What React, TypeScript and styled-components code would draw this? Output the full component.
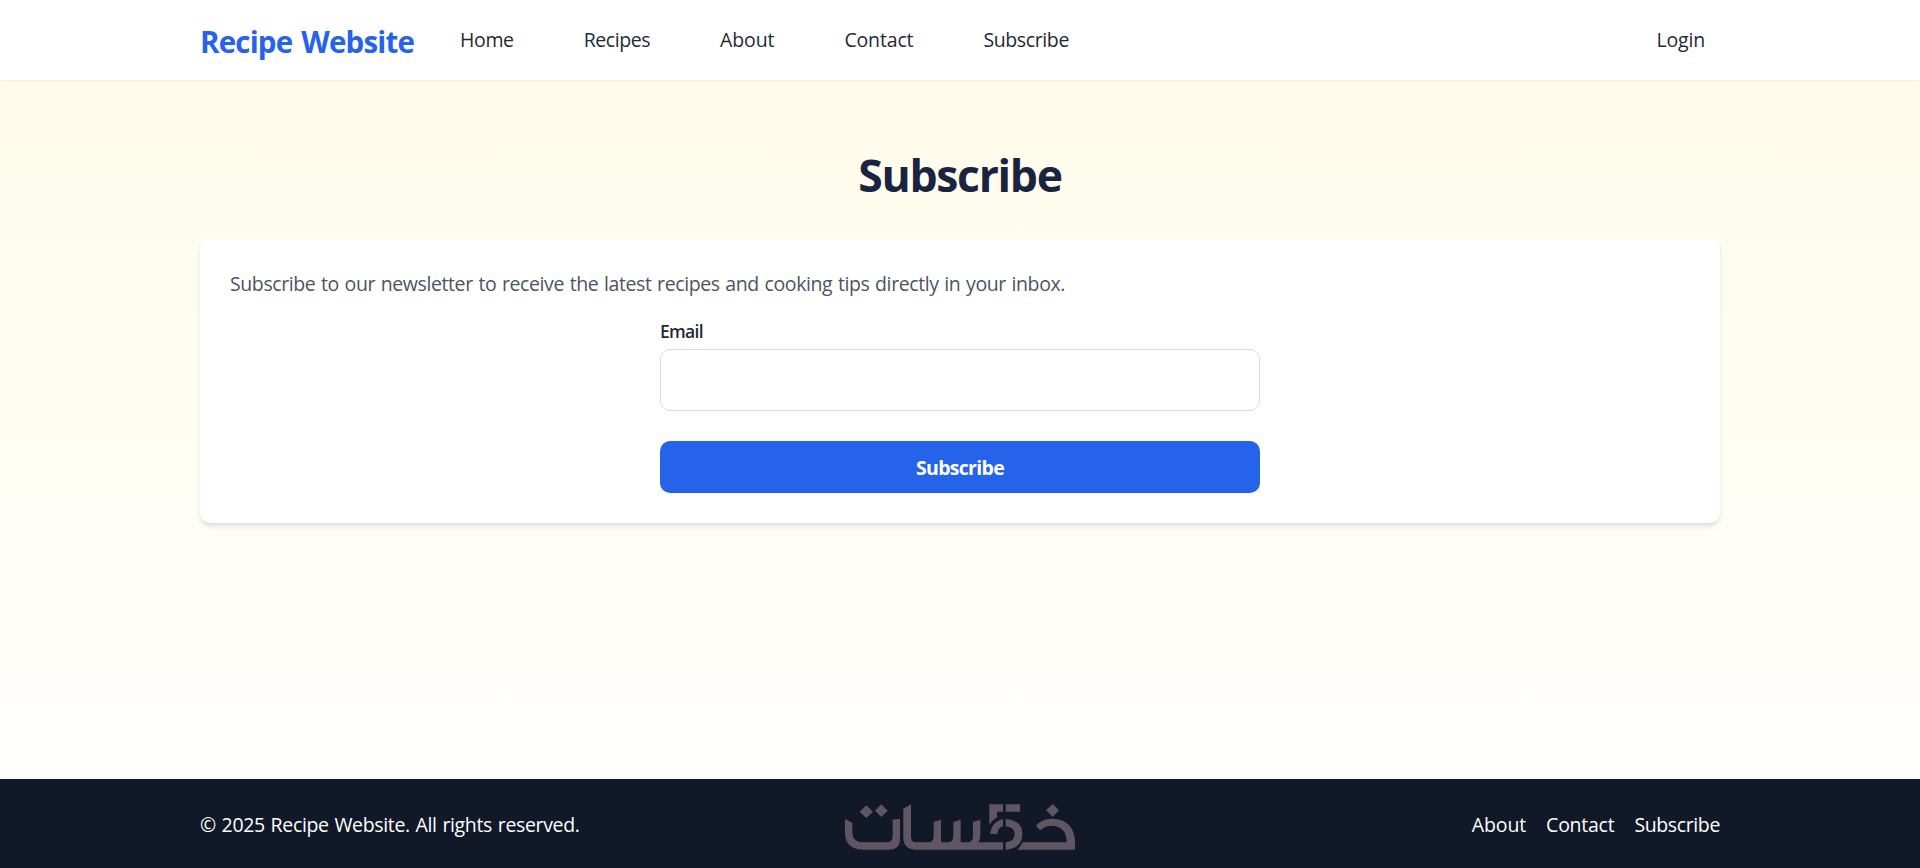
import React, { ReactElement } from 'react'
import styled, { createGlobalStyle } from 'styled-components'

interface NavItem {
    label: string
    spacing: number
}

const navItems: NavItem[] = [
    { label: 'Home', spacing: -0.35 },
    { label: 'Recipes', spacing: -0.45 },
    { label: 'About', spacing: -0.1 },
    { label: 'Contact', spacing: -0.15 },
    { label: 'Subscribe', spacing: -0.38 },
]

const footerItems: NavItem[] = [
    { label: 'About', spacing: -0.1 },
    { label: 'Contact', spacing: -0.25 },
    { label: 'Subscribe', spacing: -0.38 },
]

function NavBar(): ReactElement {
    return (
        <Header>
            <Container>
                <Brand href="#">Recipe Website</Brand>
                <NavList>
                    {navItems.map(item => (
                        <li key={item.label}>
                            <NavLink href="#" $spacing={item.spacing}>{item.label}</NavLink>
                        </li>
                    ))}
                </NavList>
                <LoginLink href="#" $spacing={-0.2}>Login</LoginLink>
            </Container>
        </Header>
    )
}

function SubscribeForm(): ReactElement {
    return (
        <Card>
            <Intro>
                Subscribe to our newsletter to receive the latest recipes and cooking tips directly in your inbox.
            </Intro>
            <Form onSubmit={e => e.preventDefault()}>
                <Label htmlFor="email">Email</Label>
                <Input id="email" type="email" />
                <SubmitButton type="submit">Subscribe</SubmitButton>
            </Form>
        </Card>
    )
}

function Khamsat(): ReactElement {
    return (
        <Watermark viewBox="45 103 690 138" aria-hidden="true">
            <path d="M109 107L129 126L109 145L89 126ZM154 104L173 123L154 142L135 123ZM668 103L687 122L668 141L648 122Z" />
            <path d="M45 148L67 159V187Q67 218 101 218H170Q188 218 188 200V150L210 147V207Q210 240 176 240H101Q45 240 45 187Z" />
            <path d="M220 117L243 104V202Q243 218 258 218H293Q311 218 311 198V157L333 150V218H352Q370 218 370 198V157L392 150V218H411Q429 218 429 198V157L451 150V192Q451 208 446 218H519V240H258Q220 240 220 202Z" />
            <path d="M478 104H519V126H501V143Q487 152 478 166ZM527 104H570V126H527Z" />
            <path d="M519 148V170Q503 175 502 193H480Q484 156 519 148ZM527 148Q577 152 577 193Q577 236 527 240V218Q554 216 554 193Q554 172 527 170Z" />
            <path d="M618 168Q636 147 665 147Q735 150 735 218V240H562Q572 232 578 218H710Q710 170 665 168Q644 168 630 182Z" />
        </Watermark>
    )
}

function Footer(): ReactElement {
    return (
        <FooterBar>
            <FooterContainer>
                <Copyright>© 2025 Recipe Website. All rights reserved.</Copyright>
                <FooterList>
                    {footerItems.map(item => (
                        <li key={item.label}>
                            <FooterLink href="#" $spacing={item.spacing}>{item.label}</FooterLink>
                        </li>
                    ))}
                </FooterList>
            </FooterContainer>
            <Khamsat />
        </FooterBar>
    )
}

export default function App(): ReactElement {
    return (
        <Page>
            <GlobalStyle />
            <NavBar />
            <Main>
                <Title>Subscribe</Title>
                <SubscribeForm />
            </Main>
            <Footer />
        </Page>
    )
}

const GlobalStyle = createGlobalStyle`
    *, *::before, *::after {
        box-sizing: border-box;
    }
    body {
        margin: 0;
        font-family: "Segoe UI", "Open Sans", "Noto Sans", sans-serif;
        font-size: 19.5px;
        line-height: 30px;
        word-spacing: 1px;
        color: #1f2937;
    }
    h1, p, ul {
        margin: 0;
        padding: 0;
    }
    ul {
        list-style: none;
    }
    a {
        color: inherit;
        text-decoration: none;
    }
`

const Page = styled.div`
    display: flex;
    flex-direction: column;
    min-height: 100vh;
    background: linear-gradient(to bottom, #fffce8, #ffffff);
`

const Header = styled.header`
    height: 80px;
    background: #ffffff;
    box-shadow: 0 1px 2px rgba(0, 0, 0, 0.06);
`

const Container = styled.div`
    display: flex;
    align-items: center;
    width: 1520px;
    height: 100%;
    margin: 0 auto;
`

const Brand = styled.a`
    width: 260px;
    padding-top: 3px;
    font-size: 29.5px;
    font-weight: 700;
    line-height: 40px;
    letter-spacing: -0.8px;
    word-spacing: 2px;
    white-space: nowrap;
    color: #2563eb;
`

const NavList = styled.ul`
    display: flex;
    gap: 70px;
`

const NavLink = styled.a<{ $spacing: number }>`
    letter-spacing: ${({ $spacing }) => $spacing}px;
    white-space: nowrap;
`

const LoginLink = styled(NavLink)`
    margin-left: auto;
    margin-right: 15px;
`

const Main = styled.main`
    flex: 1;
    width: 1520px;
    margin: 0 auto;
    padding-top: 70px;
`

const Title = styled.h1`
    margin-bottom: 38px;
    font-size: 44.5px;
    font-weight: 700;
    line-height: 50px;
    letter-spacing: -1.3px;
    text-align: center;
    color: #1a2440;
`

const Card = styled.section`
    height: 285px;
    padding: 31px 30px 30px;
    border-radius: 10px;
    background: #ffffff;
    box-shadow: 0 4px 6px -1px rgba(0, 0, 0, 0.1), 0 2px 4px -2px rgba(0, 0, 0, 0.1);
`

const Intro = styled.p`
    letter-spacing: -0.4px;
    color: #4b5563;
`

const Form = styled.form`
    display: flex;
    flex-direction: column;
    width: 600px;
    margin: 19px auto 0;
`

const Label = styled.label`
    margin-bottom: 5px;
    font-size: 17.5px;
    font-weight: 600;
    line-height: 26px;
    letter-spacing: -0.7px;
`

const Input = styled.input`
    height: 62px;
    padding: 15px;
    border: 1px solid #dcdcdc;
    border-radius: 10px;
    background: #ffffff;
    font: inherit;
    outline: none;
`

const SubmitButton = styled.button`
    height: 52px;
    margin-top: 30px;
    padding: 2px 0 0;
    border: 0;
    border-radius: 10px;
    background: #2563eb;
    color: #ffffff;
    font: inherit;
    font-weight: 700;
    letter-spacing: -0.7px;
`

const FooterBar = styled.footer`
    position: relative;
    height: 89px;
    background: #111827;
    color: #ffffff;
`

const FooterContainer = styled(Container)`
    justify-content: space-between;
    padding-top: 3px;
`

const Copyright = styled.p`
    letter-spacing: -0.34px;
`

const FooterList = styled.ul`
    display: flex;
    gap: 20px;
`

const FooterLink = styled(NavLink)``

const Watermark = styled.svg`
    position: absolute;
    left: 845px;
    bottom: 18px;
    width: 230px;
    height: 46px;
    fill: #605663;
`
